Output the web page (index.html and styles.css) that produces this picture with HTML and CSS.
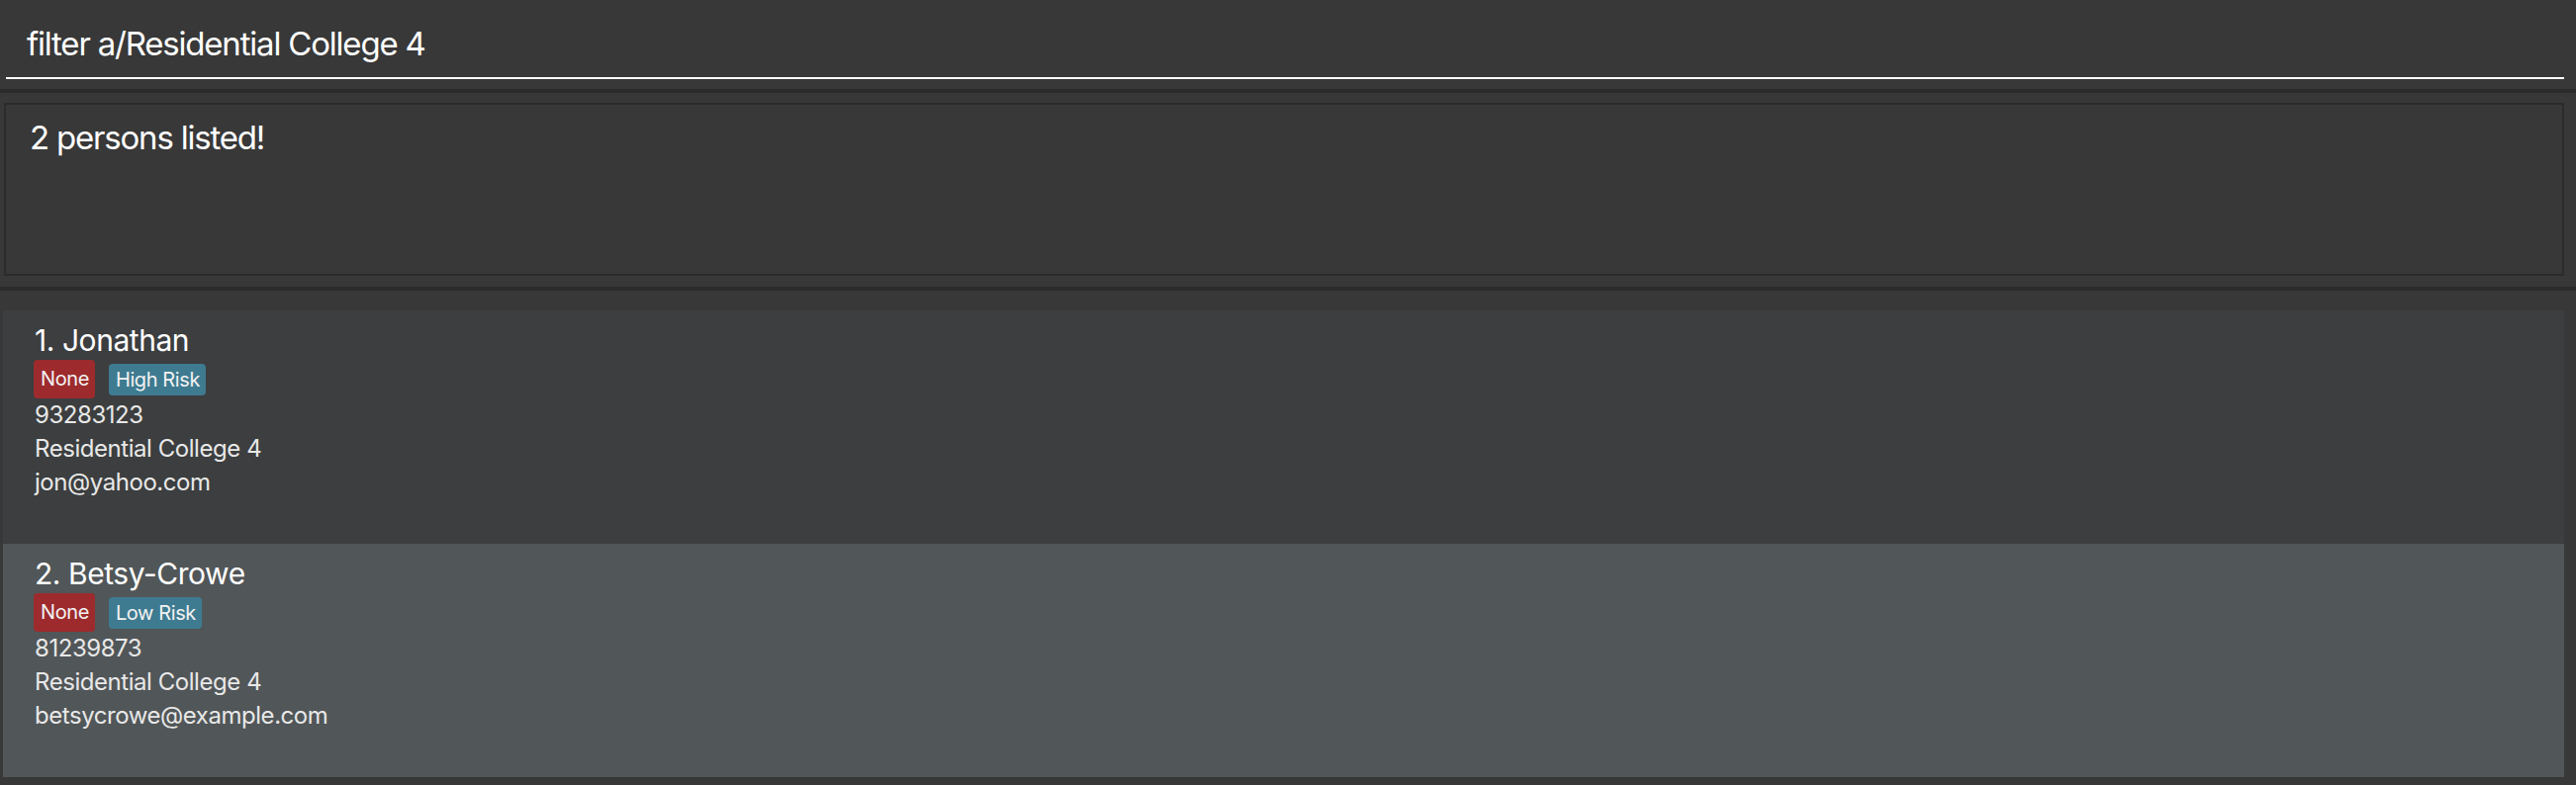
FILE: index.html
```html
<!DOCTYPE html>
<html lang="en">
<head>
<meta charset="utf-8">
<title>Address Book</title>
<link rel="stylesheet" href="styles.css">
</head>
<body>
<div class="app">
  <div class="command-pane">
    <div class="command-field">filter a/Residential College 4</div>
  </div>
  <div class="divider"></div>
  <div class="result-pane">
    <div class="result-box">2 persons listed!</div>
  </div>
  <div class="divider"></div>
  <div class="list-pane">
    <div class="card card-even">
      <div class="name">1. Jonathan</div>
      <div class="tags">
        <span class="tag tag-status">None</span>
        <span class="tag tag-risk">High Risk</span>
      </div>
      <div class="detail">93283123</div>
      <div class="detail">Residential College 4</div>
      <div class="detail">jon@yahoo.com</div>
    </div>
    <div class="card card-odd">
      <div class="name">2. Betsy-Crowe</div>
      <div class="tags">
        <span class="tag tag-status">None</span>
        <span class="tag tag-risk">Low Risk</span>
      </div>
      <div class="detail">81239873</div>
      <div class="detail">Residential College 4</div>
      <div class="detail">betsycrowe@example.com</div>
    </div>
  </div>
</div>
</body>
</html>
```
FILE: styles.css
```css
html, body {
  margin: 0;
  padding: 0;
  background: #383838;
  height: 100%;
}

.app {
  display: flex;
  flex-direction: column;
  height: 794px;
  font-family: Inter, "Noto Sans", sans-serif;
  color: #ffffff;
}

.command-pane {
  height: 90px;
  box-sizing: border-box;
  padding: 0 12px 10px 6px;
  display: flex;
  flex-direction: column;
  justify-content: flex-end;
}

.command-field {
  box-sizing: border-box;
  height: 80px;
  padding: 24px 0 0 21px;
  border-bottom: 2px solid #ffffff;
  font-size: 33px;
  line-height: 40px;
  letter-spacing: -1.2px;
  color: #ffffff;
  white-space: nowrap;
}

.divider {
  height: 4px;
  background: #2b2b2b;
  flex: none;
}

.result-pane {
  height: 196px;
  box-sizing: border-box;
  padding: 10px 12px 11px 4px;
  flex: none;
  display: flex;
}

.result-box {
  flex: 1;
  box-sizing: border-box;
  border: 2px solid #2b2b2b;
  padding: 13px 0 0 24px;
  font-size: 33px;
  line-height: 40px;
  letter-spacing: -1.2px;
  color: #ffffff;
}

.list-pane {
  flex: 1;
  box-sizing: border-box;
  padding: 20px 12px 0 3px;
  display: flex;
  flex-direction: column;
}

.card {
  height: 236px;
  box-sizing: border-box;
  padding: 12px 0 0 31px;
  display: flex;
  flex-direction: column;
  align-items: flex-start;
}

.card-even {
  background: #3c3e3f;
}

.card-odd {
  background: #515658;
}

.name {
  font-size: 30px;
  line-height: 36px;
  letter-spacing: -0.45px;
  color: #ffffff;
  margin-left: 1px;
}

.tags {
  display: flex;
  align-items: center;
  gap: 14px;
  height: 39px;
  margin-top: 2px;
}

.tag {
  font-size: 20px;
  line-height: 24px;
  letter-spacing: -0.4px;
  color: #f2f2f2;
  padding: 4px 6px 4px 7px;
  border-radius: 4px;
}

.tag-status {
  background: #9d2b2d;
  padding: 7px 6px 8px 7px;
}

.tag-risk {
  background: #3e7b91;
}

.detail {
  font-size: 24px;
  line-height: 34px;
  letter-spacing: -0.45px;
  color: #e8e8e8;
  margin-left: 1px;
}
```
